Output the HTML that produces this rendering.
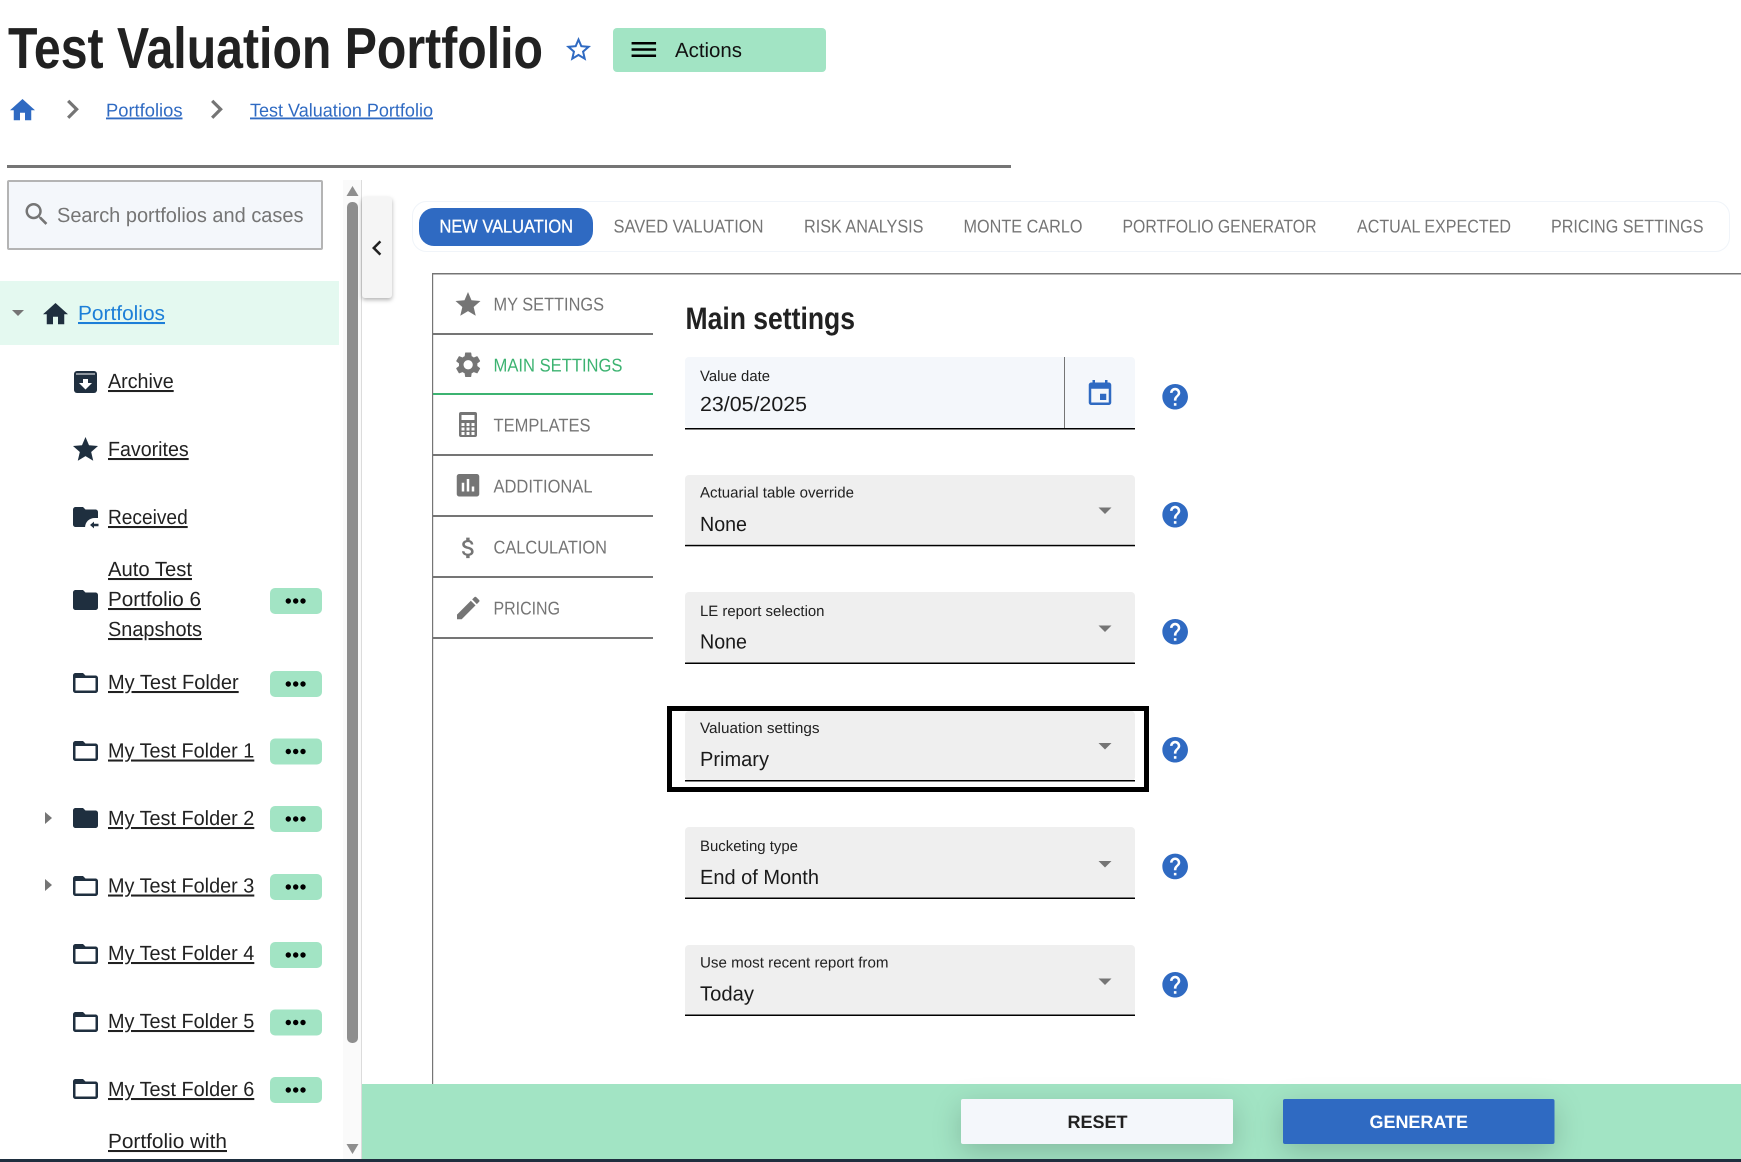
<!DOCTYPE html>
<html lang="en"><head><meta charset="utf-8"><title>Test Valuation Portfolio</title>
<style>
html,body{margin:0;padding:0;background:#fff;width:1741px;height:1162px;overflow:hidden}
svg{display:block;font-family:"Liberation Sans",Arial,sans-serif;text-rendering:geometricPrecision}
.u{text-decoration:underline}
.n{font-size:18.5px;fill:#757575}
.s{font-size:20.5px;fill:#212121;text-decoration:underline;text-decoration-thickness:1.5px}
.l{font-size:15px;fill:#212121}
.v{font-size:20.5px;fill:#1a1a1a}
.d{fill:#1f2f3f}
.m{fill:#757575}
.b{fill:#2f6ac2}
.g{fill:#a2e4c4}
</style></head><body>
<svg xmlns="http://www.w3.org/2000/svg" width="1741" height="1162" viewBox="0 0 1741 1162">
<defs>
<path id="ff" d="M10 4H4c-1.1 0-1.99.9-1.99 2L2 18c0 1.1.9 2 2 2h16c1.1 0 2-.9 2-2V8c0-1.1-.9-2-2-2h-8l-2-2z"/>
<path id="fo" d="M20 6h-8l-2-2H4c-1.1 0-1.99.9-1.99 2L2 18c0 1.1.9 2 2 2h16c1.1 0 2-.9 2-2V8c0-1.1-.9-2-2-2zm0 12H4V8h16v10z"/>
<path id="hp" d="M12 2C6.48 2 2 6.48 2 12s4.48 10 10 10 10-4.48 10-10S17.52 2 12 2zm1 17h-2v-2h2v2zm2.07-7.75l-.9.92C13.45 12.9 13 13.5 13 15h-2v-.5c0-1.1.45-2.1 1.17-2.83l1.24-1.26c.37-.36.59-.86.59-1.41 0-1.1-.9-2-2-2s-2 .9-2 2H8c0-2.21 1.79-4 4-4s4 1.79 4 4c0 .88-.36 1.68-.93 2.25z"/>
<path id="st" d="M12 17.27L18.18 21l-1.64-7.03L22 9.24l-7.19-.61L12 2 9.19 8.63 2 9.24l5.46 4.73L5.82 21z"/>
<path id="hm" d="M10 20v-6h4v6h5v-8h3L12 3 2 12h3v8z"/>
<path id="cr" d="M10 6L8.59 7.41 13.17 12l-4.58 4.59L10 18l6-6z"/>
<g id="dots"><rect width="52" height="26" rx="5" class="g"/><circle cx="18.3" cy="13" r="2.7"/><circle cx="25.7" cy="13" r="2.7"/><circle cx="33" cy="13" r="2.7"/></g>
</defs>

<!-- header -->
<text x="8" y="68" font-size="58" font-weight="700" fill="#212121" textLength="535" lengthAdjust="spacingAndGlyphs">Test Valuation Portfolio</text>
<path class="b" transform="translate(563.5 34.5) scale(1.25)" d="M22 9.24l-7.19-.62L12 2 9.19 8.63 2 9.24l5.46 4.73L5.82 21 12 17.27 18.18 21l-1.63-7.03L22 9.24zM12 15.4l-3.76 2.27 1-4.28-3.32-2.88 4.38-.38L12 6.1l1.71 4.04 4.38.38-3.32 2.88 1 4.28L12 15.4z"/>
<rect x="613" y="28" width="213" height="44" rx="4" class="g"/>
<path transform="translate(627.5 34.5) scale(1.36 1.25)" d="M3 18h18v-2H3v2zm0-5h18v-2H3v2zm0-7v2h18V6H3z"/>
<text x="675" y="57" font-size="20.5" fill="#111" textLength="67" lengthAdjust="spacingAndGlyphs">Actions</text>

<use href="#hm" class="b" transform="translate(7.5 95.25) scale(1.25)"/>
<use href="#cr" class="m" transform="translate(53.3 90.1) scale(1.6)"/>
<text x="106" y="116.500" font-size="18.500" class="b u" textLength="76.5" lengthAdjust="spacingAndGlyphs">Portfolios</text>
<use href="#cr" class="m" transform="translate(197.3 90.1) scale(1.6)"/>
<text x="250" y="116.500" font-size="18.500" class="b u" textLength="183" lengthAdjust="spacingAndGlyphs">Test Valuation Portfolio</text>
<rect x="7" y="165" width="1004" height="3" fill="#757575"/>

<!-- sidebar -->
<rect x="8" y="181" width="314" height="68" fill="#f4f7fb" stroke="#b4b4b4" stroke-width="2" rx="1"/>
<path class="m" transform="translate(21.75 199.25) scale(1.25)" d="M15.5 14h-.79l-.28-.27C15.41 12.59 16 11.11 16 9.5 16 5.91 13.09 3 9.5 3S3 5.91 3 9.5 5.91 16 9.5 16c1.61 0 3.09-.59 4.23-1.57l.27.28v.79l5 4.99L20.49 19l-4.99-5zm-6 0C7.01 14 5 11.99 5 9.5S7.01 5 9.5 5 14 7.01 14 9.5 11.99 14 9.5 14z"/>
<text x="57" y="222" font-size="20.5" fill="#757575" textLength="246.5" lengthAdjust="spacingAndGlyphs">Search portfolios and cases</text>

<rect x="0" y="281" width="339" height="64" fill="#e4f9f0"/>
<path class="m" d="M12 310h12l-6 6z"/>
<use href="#hm" class="d" transform="translate(40.5 299.25) scale(1.25)"/>
<text x="78" y="320" font-size="20.5" fill="#1d7fd8" class="u" textLength="87" lengthAdjust="spacingAndGlyphs">Portfolios</text>

<rect x="74" y="371" width="23" height="22" rx="3" class="d"/>
<rect x="76" y="373.5" width="19" height="1" fill="#fff"/>
<path fill="#fff" d="M83 379h5v4h4l-6.5 6.5-6.5-6.5h4z"/>
<text x="108" y="388" class="s" textLength="65.7" lengthAdjust="spacingAndGlyphs">Archive</text>

<use href="#st" class="d" transform="translate(70.5 434.5) scale(1.25)"/>
<text x="108" y="456" class="s" textLength="80.7" lengthAdjust="spacingAndGlyphs">Favorites</text>

<use href="#ff" class="d" transform="translate(70.5 502) scale(1.25)"/>
<path fill="#fff" d="M85 528c0-6 4-10 10-10h4v10z"/>
<path class="d" d="M90 525l4-3.4v2.2h4.500v2.400H94v2.200z"/>
<text x="108" y="524" class="s" textLength="79.700" lengthAdjust="spacingAndGlyphs">Received</text>

<use href="#ff" class="d" transform="translate(70.5 585) scale(1.25)"/>
<text x="108" y="576" class="s" textLength="84" lengthAdjust="spacingAndGlyphs">Auto Test</text>
<text x="108" y="606" class="s" textLength="93" lengthAdjust="spacingAndGlyphs">Portfolio 6</text>
<text x="108" y="636" class="s" textLength="94" lengthAdjust="spacingAndGlyphs">Snapshots</text>
<use href="#dots" x="270" y="588"/>

<use href="#fo" class="d" transform="translate(70.5 668) scale(1.25)"/>
<text x="108" y="689" class="s" textLength="130.700" lengthAdjust="spacingAndGlyphs">My Test Folder</text>
<use href="#dots" x="270" y="671"/>

<use href="#fo" class="d" transform="translate(70.5 736) scale(1.25)"/>
<text x="108" y="757.500" class="s" textLength="146.300" lengthAdjust="spacingAndGlyphs">My Test Folder 1</text>
<use href="#dots" x="270" y="738.500"/>

<path class="m" d="M45 812l7 6-7 6z"/>
<use href="#ff" class="d" transform="translate(70.5 803) scale(1.25)"/>
<text x="108" y="825" class="s" textLength="146.300" lengthAdjust="spacingAndGlyphs">My Test Folder 2</text>
<use href="#dots" x="270" y="806"/>

<path class="m" d="M45 879l7 6-7 6z"/>
<use href="#fo" class="d" transform="translate(70.5 871) scale(1.25)"/>
<text x="108" y="892.500" class="s" textLength="146.300" lengthAdjust="spacingAndGlyphs">My Test Folder 3</text>
<use href="#dots" x="270" y="874"/>

<use href="#fo" class="d" transform="translate(70.5 939) scale(1.25)"/>
<text x="108" y="960" class="s" textLength="146.300" lengthAdjust="spacingAndGlyphs">My Test Folder 4</text>
<use href="#dots" x="270" y="942"/>

<use href="#fo" class="d" transform="translate(70.5 1007) scale(1.25)"/>
<text x="108" y="1028" class="s" textLength="146.300" lengthAdjust="spacingAndGlyphs">My Test Folder 5</text>
<use href="#dots" x="270" y="1009.500"/>

<use href="#fo" class="d" transform="translate(70.5 1074) scale(1.25)"/>
<text x="108" y="1096" class="s" textLength="146.300" lengthAdjust="spacingAndGlyphs">My Test Folder 6</text>
<use href="#dots" x="270" y="1077"/>

<text x="108" y="1148" class="s" textLength="119" lengthAdjust="spacingAndGlyphs">Portfolio with</text>

<!-- scrollbar -->
<rect x="343" y="180" width="18" height="979" fill="#fafafa"/>
<rect x="361" y="180" width="1" height="979" fill="#dcdcdc"/>
<path fill="#8e8e8e" d="M352.500 186l6 10h-12z"/>
<rect x="347" y="202" width="11" height="841" rx="5" fill="#8e8e8e"/>
<path fill="#8e8e8e" d="M346.500 1144h12l-6 10z"/>

<!-- collapse tab -->
<rect x="362" y="197" width="30" height="101" rx="3" fill="#f5f5f5" style="filter:drop-shadow(0 2px 2px rgba(0,0,0,.3))"/>
<path fill="#212121" transform="translate(362 233) scale(1.25)" d="M15.41 7.41L14 6l-6 6 6 6 1.41-1.41L10.83 12z"/>

<!-- tabs -->
<rect x="412.500" y="201.500" width="1317" height="50" rx="14" fill="#fff" stroke="#f0f4f9"/>
<rect x="419" y="208" width="174" height="38" rx="15" class="b"/>
<text x="439.500" y="232.500" font-size="18.500" fill="#fff" stroke="#fff" stroke-width=".3" textLength="133.500" lengthAdjust="spacingAndGlyphs">NEW VALUATION</text>
<text x="613.500" y="232.500" class="n" textLength="150" lengthAdjust="spacingAndGlyphs">SAVED VALUATION</text>
<text x="804" y="232.500" class="n" textLength="119.500" lengthAdjust="spacingAndGlyphs">RISK ANALYSIS</text>
<text x="963.500" y="232.500" class="n" textLength="119" lengthAdjust="spacingAndGlyphs">MONTE CARLO</text>
<text x="1122.500" y="232.500" class="n" textLength="194" lengthAdjust="spacingAndGlyphs">PORTFOLIO GENERATOR</text>
<text x="1357" y="232.500" class="n" textLength="154" lengthAdjust="spacingAndGlyphs">ACTUAL EXPECTED</text>
<text x="1551" y="232.500" class="n" textLength="152.500" lengthAdjust="spacingAndGlyphs">PRICING SETTINGS</text>

<!-- panel -->
<rect x="432" y="273" width="1309" height="1.500" fill="#757575"/>
<rect x="432" y="273" width="1.200" height="811" fill="#757575"/>

<!-- vertical nav -->
<use href="#st" class="m" transform="translate(453 289.500) scale(1.25)"/>
<text x="493.500" y="310.500" class="n" textLength="110.500" lengthAdjust="spacingAndGlyphs">MY SETTINGS</text>
<rect x="433" y="333" width="220" height="2" fill="#757575"/>
<path class="m" transform="translate(452.800 349.400) scale(1.28)" d="M19.14 12.94c.04-.3.06-.61.06-.94 0-.32-.02-.64-.07-.94l2.03-1.58c.18-.14.23-.41.12-.61l-1.92-3.32c-.12-.22-.37-.29-.59-.22l-2.39.96c-.5-.38-1.03-.7-1.62-.94l-.36-2.54c-.04-.24-.24-.41-.48-.41h-3.84c-.24 0-.43.17-.47.41l-.36 2.54c-.59.24-1.13.57-1.62.94l-2.39-.96c-.22-.08-.47 0-.59.22L2.74 8.87c-.12.21-.08.47.12.61l2.03 1.58c-.05.3-.09.63-.09.94s.02.64.07.94l-2.03 1.58c-.18.14-.23.41-.12.61l1.92 3.32c.12.22.37.29.59.22l2.39-.96c.5.38 1.03.7 1.62.94l.36 2.54c.05.24.24.41.48.41h3.84c.24 0 .44-.17.47-.41l.36-2.54c.59-.24 1.13-.56 1.62-.94l2.39.96c.22.08.47 0 .59-.22l1.92-3.32c.12-.22.07-.47-.12-.61l-2.01-1.58zM12 15.6c-1.98 0-3.6-1.62-3.6-3.6s1.62-3.6 3.6-3.6 3.6 1.62 3.6 3.6-1.62 3.6-3.6 3.6z"/>
<text x="493.500" y="371.500" font-size="18.500" fill="#3cb371" textLength="129" lengthAdjust="spacingAndGlyphs">MAIN SETTINGS</text>
<rect x="433" y="393" width="220" height="2" fill="#3cb371"/>
<rect x="459" y="412" width="18" height="25" rx="2" class="m"/>
<path fill="#fff" d="M461.500 415h13v5h-13zM461.500 423h3v3h-3zM466.500 423h3v3h-3zM471.500 423h3v3h-3zM461.500 427.500h3v3h-3zM466.500 427.500h3v3h-3zM471.500 427.500h3v3h-3zM461.500 432h3v3h-3zM466.500 432h3v3h-3zM471.500 432h3v3h-3z"/>
<text x="493.500" y="431.500" class="n" textLength="97" lengthAdjust="spacingAndGlyphs">TEMPLATES</text>
<rect x="433" y="454" width="220" height="2" fill="#757575"/>
<path class="m" transform="translate(453 470.250) scale(1.25)" d="M19 3H5c-1.1 0-2 .9-2 2v14c0 1.1.9 2 2 2h14c1.100 0 2-.9 2-2V5c0-1.100-.9-2-2-2zM9 17H7v-7h2v7zm4 0h-2V7h2v10zm4 0h-2v-4h2v4z"/>
<text x="493.500" y="492.500" class="n" textLength="99" lengthAdjust="spacingAndGlyphs">ADDITIONAL</text>
<rect x="433" y="515" width="220" height="2" fill="#757575"/>
<path class="m" transform="translate(454.800 534.200) scale(1.14)" d="M11.800 10.900c-2.270-.59-3-1.200-3-2.150 0-1.090 1.010-1.850 2.700-1.850 1.780 0 2.440.85 2.500 2.100h2.210c-.07-1.720-1.120-3.300-3.210-3.810V3h-3v2.160c-1.940.42-3.500 1.680-3.500 3.610 0 2.310 1.910 3.460 4.700 4.130 2.500.6 3 1.480 3 2.410 0 .69-.49 1.790-2.700 1.790-2.060 0-2.870-.92-2.980-2.100h-2.200c.12 2.190 1.760 3.420 3.680 3.830V21h3v-2.150c1.950-.37 3.500-1.500 3.500-3.550 0-2.840-2.430-3.810-4.700-4.400z"/>
<text x="493.500" y="553.500" class="n" textLength="113.500" lengthAdjust="spacingAndGlyphs">CALCULATION</text>
<rect x="433" y="576" width="220" height="2" fill="#757575"/>
<path class="m" transform="translate(453.250 593) scale(1.25)" d="M3 17.250V21h3.750L17.810 9.940l-3.750-3.750L3 17.250zM20.710 7.040c.39-.39.39-1.020 0-1.410l-2.340-2.340c-.39-.39-1.020-.39-1.410 0l-1.830 1.830 3.750 3.750 1.830-1.830z"/>
<text x="493.500" y="614.500" class="n" textLength="66.500" lengthAdjust="spacingAndGlyphs">PRICING</text>
<rect x="433" y="637" width="220" height="2" fill="#757575"/>

<!-- form -->
<text x="685.500" y="329" font-size="31" font-weight="700" fill="#212121" textLength="169.500" lengthAdjust="spacingAndGlyphs">Main settings</text>

<rect x="685" y="357" width="450" height="71" rx="4" fill="#f4f7fb"/>
<rect x="685" y="428" width="450" height="1.500" fill="#000"/>
<rect x="1064" y="357" width="1" height="71" fill="#757575"/>
<text x="700" y="381" class="l" textLength="70" lengthAdjust="spacingAndGlyphs">Value date</text>
<text x="700" y="411" class="v" textLength="107" lengthAdjust="spacingAndGlyphs">23/05/2025</text>
<path class="b" transform="translate(1085 378.750) scale(1.25)" d="M17 12h-5v5h5v-5zM16 1v2H8V1H6v2H5c-1.110 0-1.990.9-1.990 2L3 19c0 1.100.89 2 2 2h14c1.100 0 2-.9 2-2V5c0-1.100-.9-2-2-2h-1V1h-2zm3 18H5V8h14v11z"/>
<use href="#hp" class="b" transform="translate(1159.800 381.400) scale(1.28)"/>

<rect x="685" y="475" width="450" height="71" rx="4" fill="#efefef"/>
<rect x="685" y="544.800" width="450" height="1.500" fill="#000"/>
<text x="700" y="497.500" class="l" textLength="154" lengthAdjust="spacingAndGlyphs">Actuarial table override</text>
<text x="700" y="531" class="v" textLength="47" lengthAdjust="spacingAndGlyphs">None</text>
<path class="m" d="M1098.500 507.500h13l-6.500 6.500z"/>
<use href="#hp" class="b" transform="translate(1159.800 499.400) scale(1.28)"/>

<rect x="685" y="592" width="450" height="71" rx="4" fill="#efefef"/>
<rect x="685" y="662.500" width="450" height="1.500" fill="#000"/>
<text x="700" y="616" class="l" textLength="124.500" lengthAdjust="spacingAndGlyphs">LE report selection</text>
<text x="700" y="648.500" class="v" textLength="47" lengthAdjust="spacingAndGlyphs">None</text>
<path class="m" d="M1098.500 625.500h13l-6.500 6.500z"/>
<use href="#hp" class="b" transform="translate(1159.800 616.400) scale(1.28)"/>

<rect x="685" y="711" width="450" height="70" rx="4" fill="#efefef"/>
<rect x="685" y="780" width="450" height="1.500" fill="#000"/>
<rect x="669.500" y="708.500" width="477" height="81" fill="none" stroke="#000" stroke-width="5"/>
<text x="700" y="733" class="l" textLength="119.500" lengthAdjust="spacingAndGlyphs">Valuation settings</text>
<text x="700" y="766" class="v" textLength="69" lengthAdjust="spacingAndGlyphs">Primary</text>
<path class="m" d="M1098.500 743h13l-6.500 6.500z"/>
<use href="#hp" class="b" transform="translate(1159.800 734.400) scale(1.28)"/>

<rect x="685" y="827" width="450" height="71" rx="4" fill="#efefef"/>
<rect x="685" y="897.500" width="450" height="1.500" fill="#000"/>
<text x="700" y="851" class="l" textLength="98" lengthAdjust="spacingAndGlyphs">Bucketing type</text>
<text x="700" y="884" class="v" textLength="119" lengthAdjust="spacingAndGlyphs">End of Month</text>
<path class="m" d="M1098.500 861h13l-6.500 6.500z"/>
<use href="#hp" class="b" transform="translate(1159.800 851.100) scale(1.28)"/>

<rect x="685" y="945" width="450" height="71" rx="4" fill="#efefef"/>
<rect x="685" y="1014.500" width="450" height="1.500" fill="#000"/>
<text x="700" y="967.500" class="l" textLength="188.500" lengthAdjust="spacingAndGlyphs">Use most recent report from</text>
<text x="700" y="1000.500" class="v" textLength="54" lengthAdjust="spacingAndGlyphs">Today</text>
<path class="m" d="M1098.500 978.500h13l-6.500 6.500z"/>
<use href="#hp" class="b" transform="translate(1159.800 969.400) scale(1.28)"/>

<!-- footer bar -->
<rect x="362" y="1084" width="1379" height="75" class="g"/>
<rect x="961" y="1099" width="272" height="45" rx="2" fill="#f4f7fb" style="filter:drop-shadow(0 8px 14px rgba(0,0,0,.18))"/>
<text x="1067.500" y="1128" font-size="18" font-weight="700" fill="#212121" textLength="60" lengthAdjust="spacing">RESET</text>
<rect x="1283" y="1099" width="271.500" height="45" rx="2" class="b" style="filter:drop-shadow(0 8px 14px rgba(0,0,0,.18))"/>
<text x="1369.500" y="1128" font-size="18" font-weight="700" fill="#fff" textLength="98.500" lengthAdjust="spacing">GENERATE</text>
<rect x="0" y="1159" width="1741" height="3" fill="#1f2f3f"/>
</svg>
</body></html>
